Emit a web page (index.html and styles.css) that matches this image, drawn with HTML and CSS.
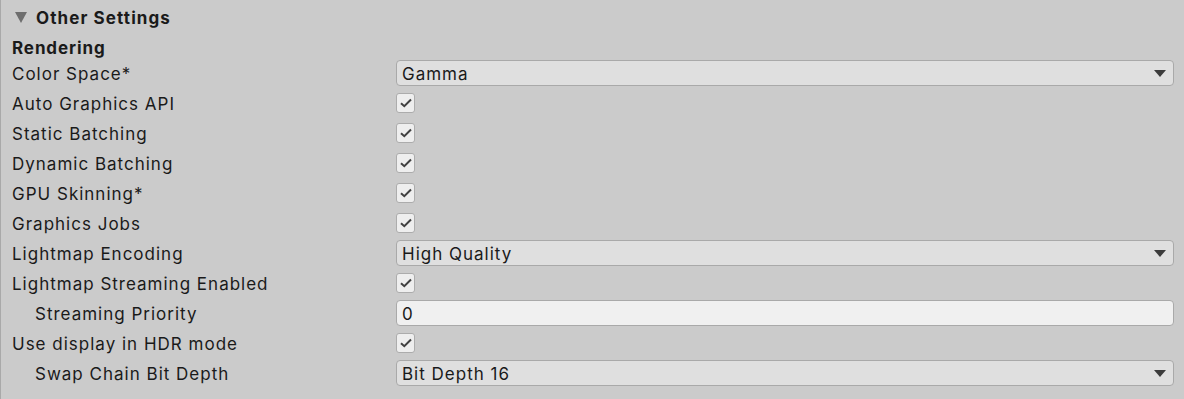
FILE: index.html
```html
<!DOCTYPE html>
<html lang="en">
  <head>
    <meta charset="UTF-8" />
    <title>Other Settings</title>
    <link rel="stylesheet" href="styles.css">
  </head>
  <body>
    <div class="inspector">
      <div class="foldout">
        <span class="foldout-arrow"></span>
        <span class="foldout-title">Other Settings</span>
      </div>
      <div class="section-title">Rendering</div>

      <div class="rows">
        <div class="row">
          <label class="label">Color Space*</label>
          <div class="dropdown"><span class="value">Gamma</span><span class="caret"></span></div>
        </div>
        <div class="row">
          <label class="label">Auto Graphics API</label>
          <div class="checkbox"><svg viewBox="0 0 12 10"><path d="M1 5.2 L4.3 8.2 L11 1.5" /></svg></div>
        </div>
        <div class="row">
          <label class="label">Static Batching</label>
          <div class="checkbox"><svg viewBox="0 0 12 10"><path d="M1 5.2 L4.3 8.2 L11 1.5" /></svg></div>
        </div>
        <div class="row">
          <label class="label">Dynamic Batching</label>
          <div class="checkbox"><svg viewBox="0 0 12 10"><path d="M1 5.2 L4.3 8.2 L11 1.5" /></svg></div>
        </div>
        <div class="row">
          <label class="label">GPU Skinning*</label>
          <div class="checkbox"><svg viewBox="0 0 12 10"><path d="M1 5.2 L4.3 8.2 L11 1.5" /></svg></div>
        </div>
        <div class="row">
          <label class="label">Graphics Jobs</label>
          <div class="checkbox"><svg viewBox="0 0 12 10"><path d="M1 5.2 L4.3 8.2 L11 1.5" /></svg></div>
        </div>
        <div class="row">
          <label class="label">Lightmap Encoding</label>
          <div class="dropdown"><span class="value">High Quality</span><span class="caret"></span></div>
        </div>
        <div class="row">
          <label class="label">Lightmap Streaming Enabled</label>
          <div class="checkbox"><svg viewBox="0 0 12 10"><path d="M1 5.2 L4.3 8.2 L11 1.5" /></svg></div>
        </div>
        <div class="row">
          <label class="label indent">Streaming Priority</label>
          <div class="textfield"><span class="value">0</span></div>
        </div>
        <div class="row">
          <label class="label">Use display in HDR mode</label>
          <div class="checkbox"><svg viewBox="0 0 12 10"><path d="M1 5.2 L4.3 8.2 L11 1.5" /></svg></div>
        </div>
        <div class="row">
          <label class="label indent">Swap Chain Bit Depth</label>
          <div class="dropdown"><span class="value">Bit Depth 16</span><span class="caret"></span></div>
        </div>
      </div>
    </div>
  </body>
</html>
```

FILE: styles.css
```css
body {
  margin: 0;
  background: #cbcbcb;
  font-family: Inter, "Noto Sans", sans-serif;
  font-size: 17px;
  letter-spacing: 1px;
  color: #1a1a1a;
}

.inspector {
  border-left: 1px solid #a9a9a9;
  min-height: 399px;
  box-sizing: border-box;
  padding: 0 10px 0 11px;
}

/* Foldout header */
.foldout {
  height: 35px;
  display: flex;
  align-items: center;
}

.foldout-arrow {
  width: 0;
  height: 0;
  margin-left: 3px;
  margin-right: 9px;
  border-left: 6px solid transparent;
  border-right: 6px solid transparent;
  border-top: 11px solid #6e6e6e;
}

.foldout-title {
  font-weight: bold;
  letter-spacing: 1.1px;
}

.section-title {
  height: 25px;
  display: flex;
  align-items: center;
  font-weight: bold;
  letter-spacing: 0.9px;
}

/* Property rows */
.rows {
  display: flex;
  flex-direction: column;
  gap: 4px;
}

.row {
  display: grid;
  grid-template-columns: 384px 1fr;
  align-items: center;
  height: 26px;
}

.label {
  white-space: nowrap;
  padding-top: 2px;
}

.label.indent {
  padding-left: 23px;
}

.dropdown,
.textfield {
  height: 26px;
  box-sizing: border-box;
  border: 1px solid #a9a9a9;
  border-radius: 4px;
  display: flex;
  align-items: center;
  padding: 0 7px 0 5px;
}

.value {
  padding-top: 2px;
}

.dropdown {
  background: #dfdfdf;
  justify-content: space-between;
}

.textfield {
  background: #f0f0f0;
}

.caret {
  width: 0;
  height: 0;
  border-left: 6px solid transparent;
  border-right: 6px solid transparent;
  border-top: 7px solid #3b3b3b;
  margin-top: 1px;
}

.checkbox {
  width: 19px;
  height: 20px;
  box-sizing: border-box;
  border: 1px solid #acacac;
  border-radius: 3px;
  background: #eeeeee;
  display: flex;
  align-items: center;
  justify-content: center;
}

.checkbox svg {
  width: 12px;
  height: 10px;
  fill: none;
  stroke: #414141;
  stroke-width: 2;
}
```
